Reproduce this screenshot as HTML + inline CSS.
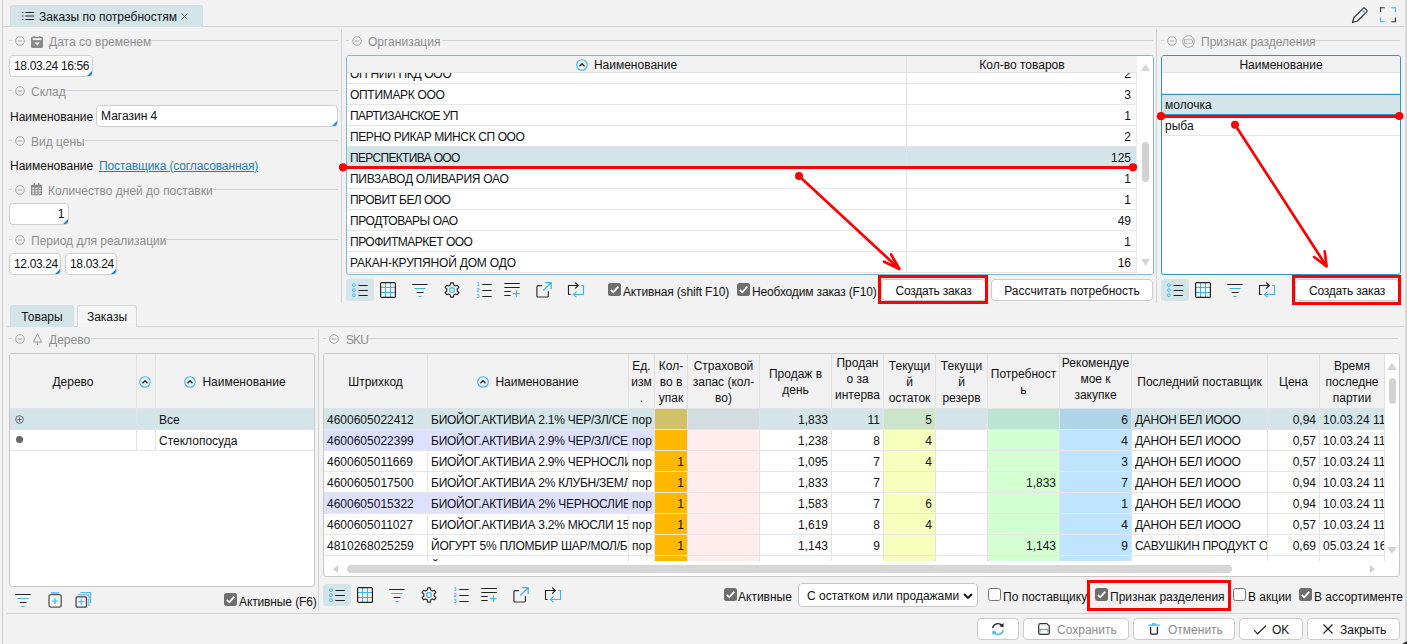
<!DOCTYPE html>
<html lang="ru"><head><meta charset="utf-8"><title>Заказы по потребностям</title>
<style>
*{box-sizing:border-box;margin:0;padding:0}
html,body{width:1407px;height:644px;overflow:hidden}
body{background:#f2f2f2;font-family:"Liberation Sans",sans-serif;font-size:12px;color:#111;position:relative}
.t{position:absolute;white-space:nowrap;line-height:14px;height:14px}
.g{color:#8d8d8d}
.ic{position:absolute;overflow:visible}
.ln{position:absolute;height:1px;background:#d2d2d2}
.vl{position:absolute;width:1px;background:#d2d2d2}
.box{position:absolute;background:#fff;border:1px solid #c8c8c8;border-radius:3px}
.inp{position:absolute;background:#fff;border:1px solid #cfcfcf;border-radius:4px;height:22px;line-height:21px;padding:0 4px;white-space:nowrap;overflow:hidden;letter-spacing:-0.35px}
.inp:after{content:"";position:absolute;right:0;bottom:0;border-style:solid;border-width:0 0 5px 5px;border-color:transparent transparent #1e8bc3 transparent}
.btn{position:absolute;background:#fff;border:1px solid #cbcbcb;border-radius:4px;height:22px;line-height:22px;text-align:center;white-space:nowrap}
.cb{position:absolute;width:13px;height:13px;border:1px solid #767676;border-radius:2.5px;background:#fff}
.cb.on{background:#6e6e6e;border:0}
.cb svg{display:block}
.tab{position:absolute;height:22px;border:1px solid #d6d6d6;border-bottom:0;border-radius:3px 3px 0 0;line-height:23px;text-align:center;background:#f5f5f5}
.tab.on{background:#d4e5ea;border-color:#cfdfe4}
.row{position:absolute;left:0;right:0;height:21px;border-bottom:1px solid #e6e6e6;line-height:23px;white-space:nowrap}
.hd{position:absolute;background:#f1f1f1;border-bottom:1px solid #e2e2e2}
.c{position:absolute;top:0;bottom:0;overflow:hidden;white-space:nowrap;padding:0 3px;border-right:1px solid #e3e3e3}
.r{text-align:right}
.up{letter-spacing:-0.35px}
.up2{letter-spacing:-0.25px}
.up3{letter-spacing:-0.3px}
.selbg{background:#d4e5ea}
.sort{display:inline-block;vertical-align:-2px;margin-right:6px}
.redbox{position:absolute;border:3px solid #ff0000}
.lg{position:absolute;height:14px}
</style></head><body>

<div class="vl" style="left:2px;top:0;height:644px;background:#cdcdcd"></div>
<div class="vl" style="left:1405px;top:0;height:644px;width:2px;background:linear-gradient(90deg,#e2e2e2,#cccccc)"></div>
<svg class="ic" style="left:1402px;top:641px" width="5" height="3" viewBox="0 0 5 3"><path d="M0 3L5 0V3z" fill="#333"/></svg>
<div class="ln" style="left:3px;top:26px;width:1401px"></div>
<div class="tab on" style="left:10px;top:5px;width:193px;height:22px"></div>
<svg class="ic" style="left:22px;top:11px" width="12" height="10" viewBox="0 0 12 10"><g stroke="#222" stroke-width="1.2"><path d="M0 1.5H1.5M3.5 1.5H12M0 5H1.5M3.5 5H12M0 8.5H1.5M3.5 8.5H12"/></g></svg>
<div class="t " style="left:39px;top:10px;">Заказы по потребностям</div>
<svg class="ic" style="left:181px;top:13px" width="7" height="7" viewBox="0 0 7 7"><path d="M0.5 0.5L6.5 6.5M6.5 0.5L0.5 6.5" stroke="#777" stroke-width="0.9"/></svg>
<svg class="ic" style="left:1351px;top:6px" width="18" height="18" viewBox="0 0 18 18"><path d="M1.5 16.5L3 11.5L12.2 2.3a1.2 1.2 0 0 1 1.7 0L15.7 4.1a1.2 1.2 0 0 1 0 1.7L6.5 15L1.5 16.5z" fill="none" stroke="#333" stroke-width="1.2" stroke-linejoin="round"/><path d="M11 3.8L14.2 7" stroke="#3db4e8" stroke-width="1.2"/></svg>
<svg class="ic" style="left:1380px;top:7px" width="16" height="15.5" viewBox="0 0 17 16"><path d="M0.6 5V0.6H5M12 15.4H16.4V11" fill="none" stroke="#333" stroke-width="1.2"/><path d="M12 0.6H16.4V5M0.6 11V15.4H5" fill="none" stroke="#3db4e8" stroke-width="1.2"/></svg>
<div class="ln" style="left:9px;top:40px;width:3px"></div><svg class="ic" style="left:15px;top:36px" width="10" height="10" viewBox="0 0 10 10"><circle cx="5" cy="5" r="4.3" fill="none" stroke="#9a9a9a" stroke-width="0.9"/><path d="M2.8 5H7.2" stroke="#9a9a9a" stroke-width="0.9"/></svg><svg class="ic" style="left:31px;top:36px" width="12" height="12" viewBox="0 0 12 12"><rect x="0" y="0.8" width="12" height="11.2" rx="1.3" fill="#8b8b8b"/><rect x="2.4" y="0" width="1.4" height="1.5" fill="#8b8b8b"/><rect x="8.2" y="0" width="1.4" height="1.5" fill="#8b8b8b"/><rect x="1.7" y="2.2" width="8.8" height="1.9" fill="#f2f2f2"/><path d="M3.6 6.4H8.8L6.2 9.6z" fill="#f2f2f2"/></svg><div class="t g" style="left:49px;top:35px;">Дата со временем</div><div class="ln" style="left:151px;top:40px;width:187px"></div>
<div class="inp" style="left:9px;top:55px;width:84px">18.03.24 16:56</div>
<div class="ln" style="left:9px;top:90px;width:3px"></div><svg class="ic" style="left:15px;top:86px" width="10" height="10" viewBox="0 0 10 10"><circle cx="5" cy="5" r="4.3" fill="none" stroke="#9a9a9a" stroke-width="0.9"/><path d="M2.8 5H7.2" stroke="#9a9a9a" stroke-width="0.9"/></svg><div class="t g" style="left:31px;top:85px;">Склад</div><div class="ln" style="left:65px;top:90px;width:273px"></div>
<div class="t " style="left:10px;top:110px;">Наименование</div>
<div class="inp" style="left:96px;top:105px;width:242px;letter-spacing:0">Магазин 4</div>
<div class="ln" style="left:9px;top:140px;width:3px"></div><svg class="ic" style="left:15px;top:136px" width="10" height="10" viewBox="0 0 10 10"><circle cx="5" cy="5" r="4.3" fill="none" stroke="#9a9a9a" stroke-width="0.9"/><path d="M2.8 5H7.2" stroke="#9a9a9a" stroke-width="0.9"/></svg><div class="t g" style="left:31px;top:135px;">Вид цены</div><div class="ln" style="left:85px;top:140px;width:253px"></div>
<div class="t " style="left:10px;top:159px;">Наименование</div>
<div class="t " style="left:99px;top:159px;color:#1a7fb5;text-decoration:underline;letter-spacing:-0.13px">Поставщика (согласованная)</div>
<div class="ln" style="left:9px;top:189px;width:3px"></div><svg class="ic" style="left:15px;top:185px" width="10" height="10" viewBox="0 0 10 10"><circle cx="5" cy="5" r="4.3" fill="none" stroke="#9a9a9a" stroke-width="0.9"/><path d="M2.8 5H7.2" stroke="#9a9a9a" stroke-width="0.9"/></svg><svg class="ic" style="left:31px;top:182.5px" width="11" height="12.5" viewBox="0 0 11 12.5"><rect x="0" y="1.8" width="11" height="10.4" rx="1" fill="#8b8b8b"/><rect x="2.6" y="0" width="1.3" height="2.2" fill="#8b8b8b"/><rect x="7.1" y="0" width="1.3" height="2.2" fill="#8b8b8b"/><g fill="#f2f2f2"><rect x="1.3" y="4.6" width="2" height="1.6"/><rect x="4.5" y="4.6" width="2" height="1.6"/><rect x="7.7" y="4.6" width="2" height="1.6"/><rect x="1.3" y="7.1" width="2" height="1.6"/><rect x="4.5" y="7.1" width="2" height="1.6"/><rect x="7.7" y="7.1" width="2" height="1.6"/><rect x="1.3" y="9.6" width="2" height="1.5"/><rect x="4.5" y="9.6" width="2" height="1.5"/><rect x="7.7" y="9.6" width="2" height="1.5"/></g></svg><div class="t g" style="left:48px;top:184px;">Количество дней до поставки</div><div class="ln" style="left:213px;top:189px;width:125px"></div>
<div class="inp r" style="left:9px;top:203px;width:60px;text-align:right">1</div>
<div class="ln" style="left:9px;top:239px;width:3px"></div><svg class="ic" style="left:15px;top:235px" width="10" height="10" viewBox="0 0 10 10"><circle cx="5" cy="5" r="4.3" fill="none" stroke="#9a9a9a" stroke-width="0.9"/><path d="M2.8 5H7.2" stroke="#9a9a9a" stroke-width="0.9"/></svg><div class="t g" style="left:31px;top:234px;">Период для реализации</div><div class="ln" style="left:165px;top:239px;width:173px"></div>
<div class="inp" style="left:9px;top:253px;width:52px">12.03.24</div>
<div class="inp" style="left:65px;top:253px;width:52px">18.03.24</div>
<div class="vl" style="left:341px;top:29px;height:274px"></div>
<div class="vl" style="left:1156px;top:29px;height:274px"></div>
<div class="ln" style="left:346px;top:40px;width:3px"></div><svg class="ic" style="left:352px;top:36px" width="10" height="10" viewBox="0 0 10 10"><circle cx="5" cy="5" r="4.3" fill="none" stroke="#9a9a9a" stroke-width="0.9"/><path d="M2.8 5H7.2" stroke="#9a9a9a" stroke-width="0.9"/></svg><div class="t g" style="left:368px;top:35px;">Организация</div><div class="ln" style="left:442px;top:40px;width:711px"></div>
<div class="box" style="left:346px;top:55px;width:808px;height:220px;border-color:#7fb9d6;overflow:hidden">
<div style="position:absolute;left:0;top:17px;right:16px;bottom:0;overflow:hidden">
<div class="row" style="top:-10px"><div class="c" style="left:0;width:560px;letter-spacing:-0.3px">ОП НИИ ПКД ООО</div><div class="c r" style="left:560px;width:230px;border-right:1px solid #e8e8e8;padding-right:5px">2</div></div>
<div class="row" style="top:11px"><div class="c" style="left:0;width:560px;letter-spacing:-0.3px">ОПТИМАРК ООО</div><div class="c r" style="left:560px;width:230px;border-right:1px solid #e8e8e8;padding-right:5px">3</div></div>
<div class="row" style="top:32px"><div class="c" style="left:0;width:560px;letter-spacing:-0.57px">ПАРТИЗАНСКОЕ УП</div><div class="c r" style="left:560px;width:230px;border-right:1px solid #e8e8e8;padding-right:5px">1</div></div>
<div class="row" style="top:53px"><div class="c" style="left:0;width:560px;letter-spacing:-0.39px">ПЕРНО РИКАР МИНСК СП ООО</div><div class="c r" style="left:560px;width:230px;border-right:1px solid #e8e8e8;padding-right:5px">2</div></div>
<div class="row selbg" style="top:74px"><div class="c" style="left:0;width:560px;letter-spacing:-0.67px">ПЕРСПЕКТИВА ООО</div><div class="c r" style="left:560px;width:230px;border-right:1px solid #e8e8e8;padding-right:5px">125</div></div>
<div class="row" style="top:95px"><div class="c" style="left:0;width:560px;letter-spacing:-0.27px">ПИВЗАВОД ОЛИВАРИЯ ОАО</div><div class="c r" style="left:560px;width:230px;border-right:1px solid #e8e8e8;padding-right:5px">1</div></div>
<div class="row" style="top:116px"><div class="c" style="left:0;width:560px;letter-spacing:-0.56px">ПРОВИТ БЕЛ ООО</div><div class="c r" style="left:560px;width:230px;border-right:1px solid #e8e8e8;padding-right:5px">1</div></div>
<div class="row" style="top:137px"><div class="c" style="left:0;width:560px;letter-spacing:-0.41px">ПРОДТОВАРЫ ОАО</div><div class="c r" style="left:560px;width:230px;border-right:1px solid #e8e8e8;padding-right:5px">49</div></div>
<div class="row" style="top:158px"><div class="c" style="left:0;width:560px;letter-spacing:-0.5px">ПРОФИТМАРКЕТ ООО</div><div class="c r" style="left:560px;width:230px;border-right:1px solid #e8e8e8;padding-right:5px">1</div></div>
<div class="row" style="top:179px"><div class="c" style="left:0;width:560px;letter-spacing:-0.18px">РАКАН-КРУПЯНОЙ ДОМ ОДО</div><div class="c r" style="left:560px;width:230px;border-right:1px solid #e8e8e8;padding-right:5px">16</div></div>
</div>
<div class="hd" style="left:0;top:0;right:0;height:17px;line-height:18px;text-align:center"><div class="c" style="left:0;width:560px"><svg class="sort" width="12" height="12" viewBox="0 0 12 12"><circle cx="6" cy="6" r="5.3" fill="none" stroke="#3db4e8" stroke-width="1.1"/><path d="M3.5 7.2L6 4.7L8.5 7.2" fill="none" stroke="#222" stroke-width="1.3"/></svg>Наименование</div><div class="c" style="left:560px;width:230px;border-right:0">Кол-во товаров</div></div>
<div style="position:absolute;right:0;top:0;bottom:0;width:16px;background:#fff"></div>
<svg class="ic" style="right:3px;top:8px" width="9" height="7" viewBox="0 0 9 7"><path d="M0 7L4.5 0L9 7z" fill="#d4d4d4"/></svg>
<svg class="ic" style="right:3px;top:203px" width="9" height="7" viewBox="0 0 9 7"><path d="M0 0L4.5 7L9 0z" fill="#d4d4d4"/></svg>
<div style="position:absolute;right:4px;top:86px;width:7px;height:40px;border-radius:4px;background:#d2d2d2"></div>
</div>
<div style="position:absolute;left:346px;top:279px;width:28px;height:22px;border-radius:3px;background:#d4e5ea"></div>
<svg class="ic" style="left:352px;top:282px" width="16" height="16" viewBox="0 0 16 16"><g fill="none" stroke="#3db4e8" stroke-width="0.9"><circle cx="1.9" cy="3.2" r="1.45"/><circle cx="1.9" cy="8.2" r="1.45"/><circle cx="1.9" cy="13.3" r="1.45"/></g><g stroke="#222" stroke-width="1"><path d="M6.5 3.5H15.8M6.5 8.5H15.8M6.5 13.5H15.8"/></g></svg>
<svg class="ic" style="left:380px;top:282px" width="16" height="16" viewBox="0 0 16 16"><rect x="0.6" y="0.6" width="14.8" height="14.8" rx="1" fill="#f6f6f6" stroke="none"/><g fill="none" stroke="#3db4e8" stroke-width="1"><path d="M5.5 1V15M10.5 1V15M1 5.5H15M1 10.5H15"/></g><rect x="0.6" y="0.6" width="14.8" height="14.8" rx="1" fill="none" stroke="#222" stroke-width="1.2"/></svg>
<svg class="ic" style="left:412px;top:282px" width="16" height="16" viewBox="0 0 16 16"><g fill="none" stroke-width="1"><path stroke="#222" d="M0.2 2.5H15.6M4.7 10.5H11.5"/><path stroke="#3db4e8" d="M2.4 6.5H13.5M6.4 14.5H9.6"/></g></svg>
<svg class="ic" style="left:444px;top:282px" width="16" height="16" viewBox="0 0 16 16"><path fill="none" stroke="#222" stroke-width="1.1" stroke-linejoin="round" d="M6.27 2.99L6.61 0.83L9.39 0.83L9.73 2.99L11.48 4.00L13.51 3.21L14.90 5.62L13.20 6.99L13.20 9.01L14.90 10.38L13.51 12.79L11.48 12.00L9.73 13.01L9.39 15.17L6.61 15.17L6.27 13.01L4.52 12.00L2.49 12.79L1.10 10.38L2.80 9.01L2.80 6.99L1.10 5.62L2.49 3.21L4.52 4.00z"/><circle cx="8" cy="8" r="2.4" fill="none" stroke="#3db4e8" stroke-width="1.1"/></svg>
<svg class="ic" style="left:476px;top:282px" width="16" height="17" viewBox="0 0 16 17"><g fill="#3db4e8" font-family="Liberation Sans, sans-serif" font-size="5.4" font-weight="bold"><text x="0.6" y="4.2">1</text><text x="0.6" y="10.3">2</text><text x="0.6" y="16.2">3</text></g><g stroke="#222" stroke-width="1"><path d="M6.3 2.5H15.7M6.3 8.5H15.7M6.3 14.5H15.7"/></g></svg>
<svg class="ic" style="left:504px;top:282px" width="16" height="16" viewBox="0 0 16 16"><g stroke="#222" stroke-width="1"><path d="M0.3 1.5H15.8M0.3 5.5H15.8M0.3 9.5H6.7M0.3 13.5H6.7"/></g><g stroke="#3db4e8" stroke-width="1.1"><path d="M12.4 8.3V14.9M9.1 11.6H15.7"/></g></svg>
<svg class="ic" style="left:536px;top:282px" width="16" height="16" viewBox="0 0 16 16"><path fill="none" stroke="#333" stroke-width="1.2" d="M5.9 3.7H2.1a1.2 1.2 0 0 0-1.2 1.2V13.8a1.2 1.2 0 0 0 1.2 1.2H11.2a1.2 1.2 0 0 0 1.2-1.2V9.2"/><path fill="none" stroke="#3db4e8" stroke-width="1.2" d="M9.2 0.7H15.2V6.9M15.2 0.7L7.3 8.5"/></svg>
<svg class="ic" style="left:568px;top:282px" width="16" height="16" viewBox="0 0 16 16"><path fill="none" stroke="#222" stroke-width="1.1" d="M2.6 12.5H0.5V3.5H10.2M7.2 0.5L10.4 3.5L7.2 6.5"/><path fill="none" stroke="#3db4e8" stroke-width="1.1" d="M13.2 3.5H15.5V12.5H5.6M8.6 9.6L5.4 12.5L8.6 15.4"/></svg>
<div class="cb on" style="left:608px;top:283px"><svg width="13" height="13" viewBox="0 0 13 13"><path d="M2.8 6.8L5.3 9.3L10.3 3.6" fill="none" stroke="#fff" stroke-width="1.8"/></svg></div>
<div class="t " style="left:623px;top:285px;letter-spacing:-0.15px">Активная (shift F10)</div>
<div class="cb on" style="left:737px;top:283px"><svg width="13" height="13" viewBox="0 0 13 13"><path d="M2.8 6.8L5.3 9.3L10.3 3.6" fill="none" stroke="#fff" stroke-width="1.8"/></svg></div>
<div class="t " style="left:752px;top:285px;letter-spacing:-0.15px">Необходим заказ (F10)</div>
<div class="btn" style="left:881px;top:279px;width:105px;letter-spacing:-0.2px">Создать заказ</div>
<div class="btn" style="left:991px;top:279px;width:162px">Рассчитать потребность</div>
<div class="ln" style="left:1161px;top:40px;width:3px"></div><svg class="ic" style="left:1167px;top:36px" width="10" height="10" viewBox="0 0 10 10"><circle cx="5" cy="5" r="4.3" fill="none" stroke="#9a9a9a" stroke-width="0.9"/><path d="M2.8 5H7.2" stroke="#9a9a9a" stroke-width="0.9"/></svg><svg class="ic" style="left:1182px;top:35px" width="13" height="13" viewBox="0 0 13 13"><circle cx="6.5" cy="6.5" r="5.8" fill="none" stroke="#9a9a9a" stroke-width="0.9"/><rect x="2.5" y="4.8" width="8" height="3.4" fill="none" stroke="#9a9a9a" stroke-width="0.7"/></svg><div class="t g" style="left:1201px;top:35px;">Признак разделения</div><div class="ln" style="left:1316px;top:40px;width:84px"></div>
<div class="box" style="left:1161px;top:55px;width:240px;height:220px;border-color:#2f93c8;overflow:hidden">
<div class="hd" style="left:0;top:0;right:0;height:17px;line-height:18px;text-align:center">Наименование</div>
<div class="row" style="top:17px"></div>
<div class="row selbg" style="top:38px;border-top:1px solid #2f93c8;border-bottom-color:#2f93c8;line-height:21px"><div class="c" style="left:0;right:0;border:0">молочка</div></div>
<div class="row" style="top:59px"><div class="c" style="left:0;right:0;border:0">рыба</div></div>
</div>
<div style="position:absolute;left:1161px;top:279px;width:28px;height:22px;border-radius:3px;background:#d4e5ea"></div>
<svg class="ic" style="left:1167px;top:282px" width="16" height="16" viewBox="0 0 16 16"><g fill="none" stroke="#3db4e8" stroke-width="0.9"><circle cx="1.9" cy="3.2" r="1.45"/><circle cx="1.9" cy="8.2" r="1.45"/><circle cx="1.9" cy="13.3" r="1.45"/></g><g stroke="#222" stroke-width="1"><path d="M6.5 3.5H15.8M6.5 8.5H15.8M6.5 13.5H15.8"/></g></svg>
<svg class="ic" style="left:1195px;top:282px" width="16" height="16" viewBox="0 0 16 16"><rect x="0.6" y="0.6" width="14.8" height="14.8" rx="1" fill="#f6f6f6" stroke="none"/><g fill="none" stroke="#3db4e8" stroke-width="1"><path d="M5.5 1V15M10.5 1V15M1 5.5H15M1 10.5H15"/></g><rect x="0.6" y="0.6" width="14.8" height="14.8" rx="1" fill="none" stroke="#222" stroke-width="1.2"/></svg>
<svg class="ic" style="left:1227px;top:282px" width="16" height="16" viewBox="0 0 16 16"><g fill="none" stroke-width="1"><path stroke="#222" d="M0.2 2.5H15.6M4.7 10.5H11.5"/><path stroke="#3db4e8" d="M2.4 6.5H13.5M6.4 14.5H9.6"/></g></svg>
<svg class="ic" style="left:1259px;top:282px" width="16" height="16" viewBox="0 0 16 16"><path fill="none" stroke="#222" stroke-width="1.1" d="M2.6 12.5H0.5V3.5H10.2M7.2 0.5L10.4 3.5L7.2 6.5"/><path fill="none" stroke="#3db4e8" stroke-width="1.1" d="M13.2 3.5H15.5V12.5H5.6M8.6 9.6L5.4 12.5L8.6 15.4"/></svg>
<div class="btn" style="left:1295px;top:279px;width:104px;letter-spacing:-0.2px">Создать заказ</div>
<div class="ln" style="left:7px;top:326px;width:1397px"></div>
<div class="tab on" style="left:10px;top:305px;width:64px">Товары</div>
<div class="tab" style="left:77px;top:305px;width:60px">Заказы</div>
<div class="vl" style="left:318px;top:329px;height:282px"></div>
<div class="ln" style="left:9px;top:338px;width:3px"></div><svg class="ic" style="left:15px;top:334px" width="10" height="10" viewBox="0 0 10 10"><circle cx="5" cy="5" r="4.3" fill="none" stroke="#9a9a9a" stroke-width="0.9"/><path d="M2.8 5H7.2" stroke="#9a9a9a" stroke-width="0.9"/></svg><svg class="ic" style="left:32px;top:333px" width="11" height="12" viewBox="0 0 11 12"><path d="M5.5 0.8L9.5 9H1.5z" fill="none" stroke="#9a9a9a" stroke-width="1"/><path d="M5.5 9V12" stroke="#9a9a9a" stroke-width="1"/></svg><div class="t g" style="left:49px;top:333px;">Дерево</div><div class="ln" style="left:91px;top:338px;width:223px"></div>
<div class="box" style="left:9px;top:353px;width:306px;height:234px;overflow:hidden">
<div class="hd" style="left:0;top:0;right:0;height:55px;line-height:57px;text-align:center"><div class="c" style="left:0;width:127px">Дерево</div><div class="c" style="left:127px;width:19px;padding:0 0 0 2px;"><svg class="sort" width="12" height="12" viewBox="0 0 12 12"><circle cx="6" cy="6" r="5.3" fill="none" stroke="#3db4e8" stroke-width="1.1"/><path d="M3.5 7.2L6 4.7L8.5 7.2" fill="none" stroke="#222" stroke-width="1.3"/></svg></div><div class="c" style="left:146px;right:0;border:0"><svg class="sort" width="12" height="12" viewBox="0 0 12 12"><circle cx="6" cy="6" r="5.3" fill="none" stroke="#3db4e8" stroke-width="1.1"/><path d="M3.5 7.2L6 4.7L8.5 7.2" fill="none" stroke="#222" stroke-width="1.3"/></svg>Наименование</div></div>
<div class="row selbg" style="top:55px"><div class="c" style="left:0;width:127px"></div><div class="c" style="left:127px;width:19px"></div><div class="c" style="left:146px;right:0;border:0">Все</div></div>
<div class="row" style="top:76px"><div class="c" style="left:0;width:127px"></div><div class="c" style="left:127px;width:19px"></div><div class="c" style="left:146px;right:0;border:0">Стеклопосуда</div></div>
<svg class="ic" style="left:5px;top:61px" width="9" height="9" viewBox="0 0 9 9"><circle cx="4.5" cy="4.5" r="3.8" fill="none" stroke="#555" stroke-width="0.9"/><path d="M2.5 4.5H6.5M4.5 2.5V6.5" stroke="#555" stroke-width="0.9"/></svg>
<div style="position:absolute;left:6px;top:82px;width:7px;height:7px;border-radius:4px;background:#666"></div>
</div>
<svg class="ic" style="left:15px;top:592px" width="16" height="16" viewBox="0 0 16 16"><g fill="none" stroke-width="1"><path stroke="#222" d="M0.2 2.5H15.6M4.7 10.5H11.5"/><path stroke="#3db4e8" d="M2.4 6.5H13.5M6.4 14.5H9.6"/></g></svg>
<svg class="ic" style="left:48px;top:592px" width="14" height="16" viewBox="0 0 14 16"><rect x="1" y="2.7" width="12.2" height="12.4" rx="2" fill="#f6f6f6" stroke="#555" stroke-width="1.3"/><path d="M3 1H11" stroke="#3db4e8" stroke-width="1.4"/><path d="M7 6V12M4 9H10" stroke="#3db4e8" stroke-width="1.2"/></svg>
<svg class="ic" style="left:75px;top:592px" width="16" height="16" viewBox="0 0 16 16"><path d="M2.8 2.9H13.9V14M5.5 0.6H15.7V11.1" fill="none" stroke="#3db4e8" stroke-width="1"/><rect x="1.1" y="4.8" width="10.4" height="10.4" rx="1.2" fill="#f6f6f6" stroke="#444" stroke-width="1.3"/><path d="M6.3 6.5V13.2M2.9 9.8H9.7" stroke="#3db4e8" stroke-width="1.1"/></svg>
<div class="cb on" style="left:224px;top:593px"><svg width="13" height="13" viewBox="0 0 13 13"><path d="M2.8 6.8L5.3 9.3L10.3 3.6" fill="none" stroke="#fff" stroke-width="1.8"/></svg></div>
<div class="t " style="left:239px;top:595px;letter-spacing:-0.12px">Активные (F6)</div>
<div class="ln" style="left:323px;top:338px;width:3px"></div><svg class="ic" style="left:329px;top:334px" width="10" height="10" viewBox="0 0 10 10"><circle cx="5" cy="5" r="4.3" fill="none" stroke="#9a9a9a" stroke-width="0.9"/><path d="M2.8 5H7.2" stroke="#9a9a9a" stroke-width="0.9"/></svg><div class="t g" style="left:346px;top:333px;"><span style="letter-spacing:-0.9px">SKU</span></div><div class="ln" style="left:369px;top:338px;width:1029px"></div>
<div class="box" style="left:323px;top:353px;width:1077px;height:224px;overflow:hidden">
<div style="position:absolute;left:0;top:0;width:1061px;height:207px;overflow:hidden">
<div class="row" style="top:55px;background:#d4e5ea">
<div class="c" style="left:0px;width:104px;">4600605022412</div>
<div class="c up2" style="left:104px;width:201px;">БИОЙОГ.АКТИВИА 2.1% ЧЕР/ЗЛ/СЕМ</div>
<div class="c" style="left:305px;width:26px;">пор</div>
<div class="c r" style="left:331px;width:33px;background:#d0c068;"></div>
<div class="c" style="left:364px;width:72px;background:#d3dcdf;"></div>
<div class="c r" style="left:436px;width:72px;">1,833</div>
<div class="c r" style="left:508px;width:52px;">11</div>
<div class="c r" style="left:560px;width:52px;background:#cce4c8;">5</div>
<div class="c r" style="left:612px;width:52px;"></div>
<div class="c r" style="left:664px;width:72px;background:#bce4d2;"></div>
<div class="c r" style="left:736px;width:72px;background:#b0d4e8;">6</div>
<div class="c up3" style="left:808px;width:136px;">ДАНОН БЕЛ ИООО</div>
<div class="c r" style="left:944px;width:52px;">0,94</div>
<div class="c" style="left:996px;width:65px;">10.03.24 11</div>
</div>
<div class="row" style="top:76px;background:#dde1ff">
<div class="c" style="left:0px;width:104px;">4600605022399</div>
<div class="c up2" style="left:104px;width:201px;">БИОЙОГ.АКТИВИА 2.9% ЧЕР/ЗЛ/СЕМ</div>
<div class="c" style="left:305px;width:26px;">пор</div>
<div class="c r" style="left:331px;width:33px;background:#ffb800;"></div>
<div class="c" style="left:364px;width:72px;background:#ffeded;"></div>
<div class="c r" style="left:436px;width:72px;background:#fff;">1,238</div>
<div class="c r" style="left:508px;width:52px;background:#fff;">8</div>
<div class="c r" style="left:560px;width:52px;background:#f6ffbc;">4</div>
<div class="c r" style="left:612px;width:52px;background:#fff;"></div>
<div class="c r" style="left:664px;width:72px;background:#d3ffd3;"></div>
<div class="c r" style="left:736px;width:72px;background:#bfe4ff;">4</div>
<div class="c up3" style="left:808px;width:136px;background:#fff;">ДАНОН БЕЛ ИООО</div>
<div class="c r" style="left:944px;width:52px;background:#fff;">0,57</div>
<div class="c" style="left:996px;width:65px;background:#fff;">10.03.24 11</div>
</div>
<div class="row" style="top:97px;background:#fff">
<div class="c" style="left:0px;width:104px;">4600605011669</div>
<div class="c up2" style="left:104px;width:201px;">БИОЙОГ.АКТИВИА 2.9% ЧЕРНОСЛИВ</div>
<div class="c" style="left:305px;width:26px;">пор</div>
<div class="c r" style="left:331px;width:33px;background:#ffb800;">1</div>
<div class="c" style="left:364px;width:72px;background:#ffeded;"></div>
<div class="c r" style="left:436px;width:72px;">1,095</div>
<div class="c r" style="left:508px;width:52px;">7</div>
<div class="c r" style="left:560px;width:52px;background:#f6ffbc;">4</div>
<div class="c r" style="left:612px;width:52px;"></div>
<div class="c r" style="left:664px;width:72px;background:#d3ffd3;"></div>
<div class="c r" style="left:736px;width:72px;background:#bfe4ff;">3</div>
<div class="c up3" style="left:808px;width:136px;">ДАНОН БЕЛ ИООО</div>
<div class="c r" style="left:944px;width:52px;">0,57</div>
<div class="c" style="left:996px;width:65px;">10.03.24 11</div>
</div>
<div class="row" style="top:118px;background:#fff">
<div class="c" style="left:0px;width:104px;">4600605017500</div>
<div class="c up2" style="left:104px;width:201px;">БИОЙОГ.АКТИВИА 2% КЛУБН/ЗЕМЛ</div>
<div class="c" style="left:305px;width:26px;">пор</div>
<div class="c r" style="left:331px;width:33px;background:#ffb800;">1</div>
<div class="c" style="left:364px;width:72px;background:#ffeded;"></div>
<div class="c r" style="left:436px;width:72px;">1,833</div>
<div class="c r" style="left:508px;width:52px;">7</div>
<div class="c r" style="left:560px;width:52px;background:#f6ffbc;"></div>
<div class="c r" style="left:612px;width:52px;"></div>
<div class="c r" style="left:664px;width:72px;background:#d3ffd3;">1,833</div>
<div class="c r" style="left:736px;width:72px;background:#bfe4ff;">7</div>
<div class="c up3" style="left:808px;width:136px;">ДАНОН БЕЛ ИООО</div>
<div class="c r" style="left:944px;width:52px;">0,94</div>
<div class="c" style="left:996px;width:65px;">10.03.24 11</div>
</div>
<div class="row" style="top:139px;background:#dde1ff">
<div class="c" style="left:0px;width:104px;">4600605015322</div>
<div class="c up2" style="left:104px;width:201px;">БИОЙОГ.АКТИВИА 2% ЧЕРНОСЛИВ</div>
<div class="c" style="left:305px;width:26px;">пор</div>
<div class="c r" style="left:331px;width:33px;background:#ffb800;">1</div>
<div class="c" style="left:364px;width:72px;background:#ffeded;"></div>
<div class="c r" style="left:436px;width:72px;background:#fff;">1,583</div>
<div class="c r" style="left:508px;width:52px;background:#fff;">7</div>
<div class="c r" style="left:560px;width:52px;background:#f6ffbc;">6</div>
<div class="c r" style="left:612px;width:52px;background:#fff;"></div>
<div class="c r" style="left:664px;width:72px;background:#d3ffd3;"></div>
<div class="c r" style="left:736px;width:72px;background:#bfe4ff;">1</div>
<div class="c up3" style="left:808px;width:136px;background:#fff;">ДАНОН БЕЛ ИООО</div>
<div class="c r" style="left:944px;width:52px;background:#fff;">0,94</div>
<div class="c" style="left:996px;width:65px;background:#fff;">10.03.24 11</div>
</div>
<div class="row" style="top:160px;background:#fff">
<div class="c" style="left:0px;width:104px;">4600605011027</div>
<div class="c up2" style="left:104px;width:201px;">БИОЙОГ.АКТИВИА 3.2% МЮСЛИ 15</div>
<div class="c" style="left:305px;width:26px;">пор</div>
<div class="c r" style="left:331px;width:33px;background:#ffb800;">1</div>
<div class="c" style="left:364px;width:72px;background:#ffeded;"></div>
<div class="c r" style="left:436px;width:72px;">1,619</div>
<div class="c r" style="left:508px;width:52px;">8</div>
<div class="c r" style="left:560px;width:52px;background:#f6ffbc;">4</div>
<div class="c r" style="left:612px;width:52px;"></div>
<div class="c r" style="left:664px;width:72px;background:#d3ffd3;"></div>
<div class="c r" style="left:736px;width:72px;background:#bfe4ff;">4</div>
<div class="c up3" style="left:808px;width:136px;">ДАНОН БЕЛ ИООО</div>
<div class="c r" style="left:944px;width:52px;">0,57</div>
<div class="c" style="left:996px;width:65px;">10.03.24 11</div>
</div>
<div class="row" style="top:181px;background:#fff">
<div class="c" style="left:0px;width:104px;">4810268025259</div>
<div class="c up2" style="left:104px;width:201px;">ЙОГУРТ 5% ПЛОМБИР ШАР/МОЛ/БЕЛ</div>
<div class="c" style="left:305px;width:26px;">пор</div>
<div class="c r" style="left:331px;width:33px;background:#ffb800;">1</div>
<div class="c" style="left:364px;width:72px;background:#ffeded;"></div>
<div class="c r" style="left:436px;width:72px;">1,143</div>
<div class="c r" style="left:508px;width:52px;">9</div>
<div class="c r" style="left:560px;width:52px;background:#f6ffbc;"></div>
<div class="c r" style="left:612px;width:52px;"></div>
<div class="c r" style="left:664px;width:72px;background:#d3ffd3;">1,143</div>
<div class="c r" style="left:736px;width:72px;background:#bfe4ff;">9</div>
<div class="c up3" style="left:808px;width:136px;">САВУШКИН ПРОДУКТ ОАО</div>
<div class="c r" style="left:944px;width:52px;">0,69</div>
<div class="c" style="left:996px;width:65px;">05.03.24 16</div>
</div>
<div class="row" style="top:202px;background:#fff">
<div class="c" style="left:0px;width:104px;"></div>
<div class="c up2" style="left:104px;width:201px;">ЙОГУРТ</div>
<div class="c" style="left:305px;width:26px;"></div>
<div class="c r" style="left:331px;width:33px;background:#ffb800;"></div>
<div class="c" style="left:364px;width:72px;background:#ffeded;"></div>
<div class="c r" style="left:436px;width:72px;"></div>
<div class="c r" style="left:508px;width:52px;"></div>
<div class="c r" style="left:560px;width:52px;background:#f6ffbc;"></div>
<div class="c r" style="left:612px;width:52px;"></div>
<div class="c r" style="left:664px;width:72px;background:#d3ffd3;"></div>
<div class="c r" style="left:736px;width:72px;background:#bfe4ff;"></div>
<div class="c up3" style="left:808px;width:136px;"></div>
<div class="c r" style="left:944px;width:52px;"></div>
<div class="c" style="left:996px;width:65px;"></div>
</div>
<div class="hd" style="left:0;top:0;width:1061px;height:55px;text-align:center;overflow:hidden">
<div class="c" style="left:0px;width:104px;padding:0;border-right:1px solid #e0e0e0"><div style="line-height:57px">Штрихкод</div></div>
<div class="c" style="left:104px;width:201px;padding:0;border-right:1px solid #e0e0e0"><div style="line-height:57px"><svg class="sort" width="12" height="12" viewBox="0 0 12 12"><circle cx="6" cy="6" r="5.3" fill="none" stroke="#3db4e8" stroke-width="1.1"/><path d="M3.5 7.2L6 4.7L8.5 7.2" fill="none" stroke="#222" stroke-width="1.3"/></svg>Наименование</div></div>
<div class="c" style="left:305px;width:26px;padding:0;border-right:1px solid #e0e0e0"><div style="line-height:16px;padding-top:4px">Ед.<br>изм<br>.</div></div>
<div class="c" style="left:331px;width:33px;padding:0;border-right:1px solid #e0e0e0"><div style="line-height:16px;padding-top:4px">Кол-<br>во в<br>упак</div></div>
<div class="c" style="left:364px;width:72px;padding:0;border-right:1px solid #e0e0e0"><div style="line-height:16px;padding-top:4px">Страховой<br>запас (кол-<br>во)</div></div>
<div class="c" style="left:436px;width:72px;padding:0;border-right:1px solid #e0e0e0"><div style="line-height:16px;padding-top:12px">Продаж в<br>день</div></div>
<div class="c" style="left:508px;width:52px;padding:0;border-right:1px solid #e0e0e0"><div style="line-height:16px;padding-top:1px">Продан<br>о за<br>интерва<br>л</div></div>
<div class="c" style="left:560px;width:52px;padding:0;border-right:1px solid #e0e0e0"><div style="line-height:16px;padding-top:4px">Текущи<br>й<br>остаток</div></div>
<div class="c" style="left:612px;width:52px;padding:0;border-right:1px solid #e0e0e0"><div style="line-height:16px;padding-top:4px">Текущи<br>й<br>резерв</div></div>
<div class="c" style="left:664px;width:72px;padding:0;border-right:1px solid #e0e0e0"><div style="line-height:16px;padding-top:12px">Потребност<br>ь</div></div>
<div class="c" style="left:736px;width:72px;padding:0;border-right:1px solid #e0e0e0"><div style="line-height:16px;padding-top:1px">Рекомендуе<br>мое к<br>закупке</div></div>
<div class="c" style="left:808px;width:136px;padding:0;border-right:1px solid #e0e0e0"><div style="line-height:57px">Последний поставщик</div></div>
<div class="c" style="left:944px;width:52px;padding:0;border-right:1px solid #e0e0e0"><div style="line-height:57px">Цена</div></div>
<div class="c" style="left:996px;width:65px;padding:0;border-right:1px solid #e0e0e0"><div style="line-height:16px;padding-top:4px">Время<br>последне<br>партии</div></div>
</div>
</div>
<svg class="ic" style="left:1063px;top:9px" width="10" height="7" viewBox="0 0 10 7"><path d="M0 7L5 0L10 7z" fill="#d4d4d4"/></svg>
<svg class="ic" style="left:1063px;top:193px" width="10" height="7" viewBox="0 0 10 7"><path d="M0 0L5 7L10 0z" fill="#d4d4d4"/></svg>
<div style="position:absolute;left:1065px;top:24px;width:7px;height:26px;border-radius:4px;background:#d2d2d2"></div>
<svg class="ic" style="left:9px;top:211px" width="5" height="8" viewBox="0 0 5 8"><path d="M5 0L0 4L5 8z" fill="#d0d0d0"/></svg>
<svg class="ic" style="left:1046px;top:211px" width="5" height="8" viewBox="0 0 5 8"><path d="M0 0L5 4L0 8z" fill="#d0d0d0"/></svg>
<div style="position:absolute;left:23px;top:211px;width:885px;height:8px;border-radius:4px;background:#d6d6d6"></div>
</div>
<div style="position:absolute;left:323px;top:584px;width:28px;height:22px;border-radius:3px;background:#d4e5ea"></div>
<svg class="ic" style="left:329px;top:587px" width="16" height="16" viewBox="0 0 16 16"><g fill="none" stroke="#3db4e8" stroke-width="0.9"><circle cx="1.9" cy="3.2" r="1.45"/><circle cx="1.9" cy="8.2" r="1.45"/><circle cx="1.9" cy="13.3" r="1.45"/></g><g stroke="#222" stroke-width="1"><path d="M6.5 3.5H15.8M6.5 8.5H15.8M6.5 13.5H15.8"/></g></svg>
<svg class="ic" style="left:357px;top:587px" width="16" height="16" viewBox="0 0 16 16"><rect x="0.6" y="0.6" width="14.8" height="14.8" rx="1" fill="#f6f6f6" stroke="none"/><g fill="none" stroke="#3db4e8" stroke-width="1"><path d="M5.5 1V15M10.5 1V15M1 5.5H15M1 10.5H15"/></g><rect x="0.6" y="0.6" width="14.8" height="14.8" rx="1" fill="none" stroke="#222" stroke-width="1.2"/></svg>
<svg class="ic" style="left:389px;top:587px" width="16" height="16" viewBox="0 0 16 16"><g fill="none" stroke-width="1"><path stroke="#222" d="M0.2 2.5H15.6M4.7 10.5H11.5"/><path stroke="#3db4e8" d="M2.4 6.5H13.5M6.4 14.5H9.6"/></g></svg>
<svg class="ic" style="left:421px;top:587px" width="16" height="16" viewBox="0 0 16 16"><path fill="none" stroke="#222" stroke-width="1.1" stroke-linejoin="round" d="M6.27 2.99L6.61 0.83L9.39 0.83L9.73 2.99L11.48 4.00L13.51 3.21L14.90 5.62L13.20 6.99L13.20 9.01L14.90 10.38L13.51 12.79L11.48 12.00L9.73 13.01L9.39 15.17L6.61 15.17L6.27 13.01L4.52 12.00L2.49 12.79L1.10 10.38L2.80 9.01L2.80 6.99L1.10 5.62L2.49 3.21L4.52 4.00z"/><circle cx="8" cy="8" r="2.4" fill="none" stroke="#3db4e8" stroke-width="1.1"/></svg>
<svg class="ic" style="left:453px;top:587px" width="16" height="17" viewBox="0 0 16 17"><g fill="#3db4e8" font-family="Liberation Sans, sans-serif" font-size="5.4" font-weight="bold"><text x="0.6" y="4.2">1</text><text x="0.6" y="10.3">2</text><text x="0.6" y="16.2">3</text></g><g stroke="#222" stroke-width="1"><path d="M6.3 2.5H15.7M6.3 8.5H15.7M6.3 14.5H15.7"/></g></svg>
<svg class="ic" style="left:481px;top:587px" width="16" height="16" viewBox="0 0 16 16"><g stroke="#222" stroke-width="1"><path d="M0.3 1.5H15.8M0.3 5.5H15.8M0.3 9.5H6.7M0.3 13.5H6.7"/></g><g stroke="#3db4e8" stroke-width="1.1"><path d="M12.4 8.3V14.9M9.1 11.6H15.7"/></g></svg>
<svg class="ic" style="left:513px;top:587px" width="16" height="16" viewBox="0 0 16 16"><path fill="none" stroke="#333" stroke-width="1.2" d="M5.9 3.7H2.1a1.2 1.2 0 0 0-1.2 1.2V13.8a1.2 1.2 0 0 0 1.2 1.2H11.2a1.2 1.2 0 0 0 1.2-1.2V9.2"/><path fill="none" stroke="#3db4e8" stroke-width="1.2" d="M9.2 0.7H15.2V6.9M15.2 0.7L7.3 8.5"/></svg>
<svg class="ic" style="left:545px;top:587px" width="16" height="16" viewBox="0 0 16 16"><path fill="none" stroke="#222" stroke-width="1.1" d="M2.6 12.5H0.5V3.5H10.2M7.2 0.5L10.4 3.5L7.2 6.5"/><path fill="none" stroke="#3db4e8" stroke-width="1.1" d="M13.2 3.5H15.5V12.5H5.6M8.6 9.6L5.4 12.5L8.6 15.4"/></svg>
<div class="cb on" style="left:724px;top:588px"><svg width="13" height="13" viewBox="0 0 13 13"><path d="M2.8 6.8L5.3 9.3L10.3 3.6" fill="none" stroke="#fff" stroke-width="1.8"/></svg></div>
<div class="t " style="left:738px;top:590px;">Активные</div>
<div class="btn" style="left:798px;top:583px;width:180px;height:24px;line-height:24px;text-align:left;padding-left:8px;border-color:#c4c4c4">С остатком или продажами<svg style="position:absolute;right:4px;top:9px" width="10" height="6" viewBox="0 0 10 6"><path d="M1 1L5 5L9 1" fill="none" stroke="#111" stroke-width="1.8"/></svg></div>
<div class="cb" style="left:988px;top:588px"></div>
<div class="t " style="left:1003px;top:590px;">По поставщику</div>
<div class="cb on" style="left:1095px;top:588px"><svg width="13" height="13" viewBox="0 0 13 13"><path d="M2.8 6.8L5.3 9.3L10.3 3.6" fill="none" stroke="#fff" stroke-width="1.8"/></svg></div>
<div class="t " style="left:1110px;top:590px;">Признак разделения</div>
<div class="cb" style="left:1233px;top:588px"></div>
<div class="t " style="left:1248px;top:590px;">В акции</div>
<div class="cb on" style="left:1299px;top:588px"><svg width="13" height="13" viewBox="0 0 13 13"><path d="M2.8 6.8L5.3 9.3L10.3 3.6" fill="none" stroke="#fff" stroke-width="1.8"/></svg></div>
<div class="t " style="left:1314px;top:590px;">В ассортименте</div>
<div class="ln" style="left:7px;top:613px;width:1393px"></div>
<div class="btn" style="left:977px;top:618px;width:42px"></div>
<svg class="ic" style="left:991px;top:622px" width="14" height="14" viewBox="0 0 14 14"><path d="M1.6 6.2A5.3 5.3 0 0 1 11 3.6" fill="none" stroke="#222" stroke-width="1.3"/><path d="M12.6 1L12.4 5.6L8.4 4z" fill="#222"/><path d="M12.4 7.8A5.3 5.3 0 0 1 3 10.4" fill="none" stroke="#3db4e8" stroke-width="1.3"/><path d="M1.4 13L1.6 8.4L5.6 10z" fill="#3db4e8"/></svg>
<div class="btn g" style="left:1023px;top:618px;width:106px;text-align:left;padding-left:33px">Сохранить</div>
<svg class="ic" style="left:1038px;top:623px" width="12" height="12" viewBox="0 0 12 12"><path d="M2.2 0.7H8.8L11.3 3.2V9.8a1.5 1.5 0 0 1-1.5 1.5H2.2A1.5 1.5 0 0 1 0.7 9.8V2.2A1.5 1.5 0 0 1 2.2 0.7z" fill="#f8f8f8" stroke="#333" stroke-width="1.2"/><path d="M2 9.5V6.5H10V9.5" fill="none" stroke="#3db4e8" stroke-width="1.2"/></svg>
<div class="btn g" style="left:1133px;top:618px;width:102px;text-align:left;padding-left:34px">Отменить</div>
<svg class="ic" style="left:1148px;top:623px" width="12" height="12" viewBox="0 0 12 12"><path d="M2.6 3.8V10a1.2 1.2 0 0 0 1.2 1.2H8.2A1.2 1.2 0 0 0 9.4 10V3.8" fill="none" stroke="#222" stroke-width="1.3"/><path d="M0.2 2.1H11.8M4.5 2.1V0.7H7.5V2.1" fill="none" stroke="#3db4e8" stroke-width="1.1"/></svg>
<div class="btn" style="left:1239px;top:618px;width:64px;text-align:left;padding-left:32px">OK</div>
<svg class="ic" style="left:1253px;top:625px" width="14" height="10" viewBox="0 0 14 10"><path d="M1 5.2L4.6 8.8L13 0.6" fill="none" stroke="#222" stroke-width="1.2"/></svg>
<div class="btn" style="left:1307px;top:618px;width:93px;text-align:left;padding-left:32px">Закрыть</div>
<svg class="ic" style="left:1323px;top:624px" width="10" height="10" viewBox="0 0 10 10"><path d="M0.5 0.5L9.5 9.5M9.5 0.5L0.5 9.5" stroke="#222" stroke-width="1.2"/></svg>
<div class="redbox" style="left:878px;top:275px;width:110px;height:29px"></div>
<div class="redbox" style="left:1292px;top:275px;width:109px;height:30px"></div>
<div class="redbox" style="left:1087px;top:580px;width:144px;height:31px"></div>
<svg class="ic" style="left:0;top:0" width="1407" height="644" viewBox="0 0 1407 644"><g stroke="#ff0000" fill="#ff0000" stroke-linecap="round">
<path d="M343 167.5H1133" stroke-width="3" fill="none" stroke-linecap="butt"/><circle cx="343" cy="167.3" r="4.1" stroke="none"/><circle cx="1133" cy="167.3" r="4.1" stroke="none"/>
<circle cx="799" cy="176" r="4" stroke="none"/><path d="M799 176L898.5 268.2" stroke-width="2.7" fill="none"/><path d="M884.1 261.7L899.4 269L891 254.3" stroke-width="2.7" fill="none" stroke-linejoin="round"/>
<path d="M1161 116.5H1399.3" stroke-width="3" fill="none" stroke-linecap="butt"/><circle cx="1161" cy="116.2" r="4.1" stroke="none"/><circle cx="1399.3" cy="116" r="4.1" stroke="none"/>
<circle cx="1235" cy="124.7" r="4" stroke="none"/><path d="M1235 124.7L1326 265.5" stroke-width="2.7" fill="none"/><path d="M1314.1 257L1326.6 266.3L1324.7 251.3" stroke-width="2.7" fill="none" stroke-linejoin="round"/>
</g></svg>
</body></html>
